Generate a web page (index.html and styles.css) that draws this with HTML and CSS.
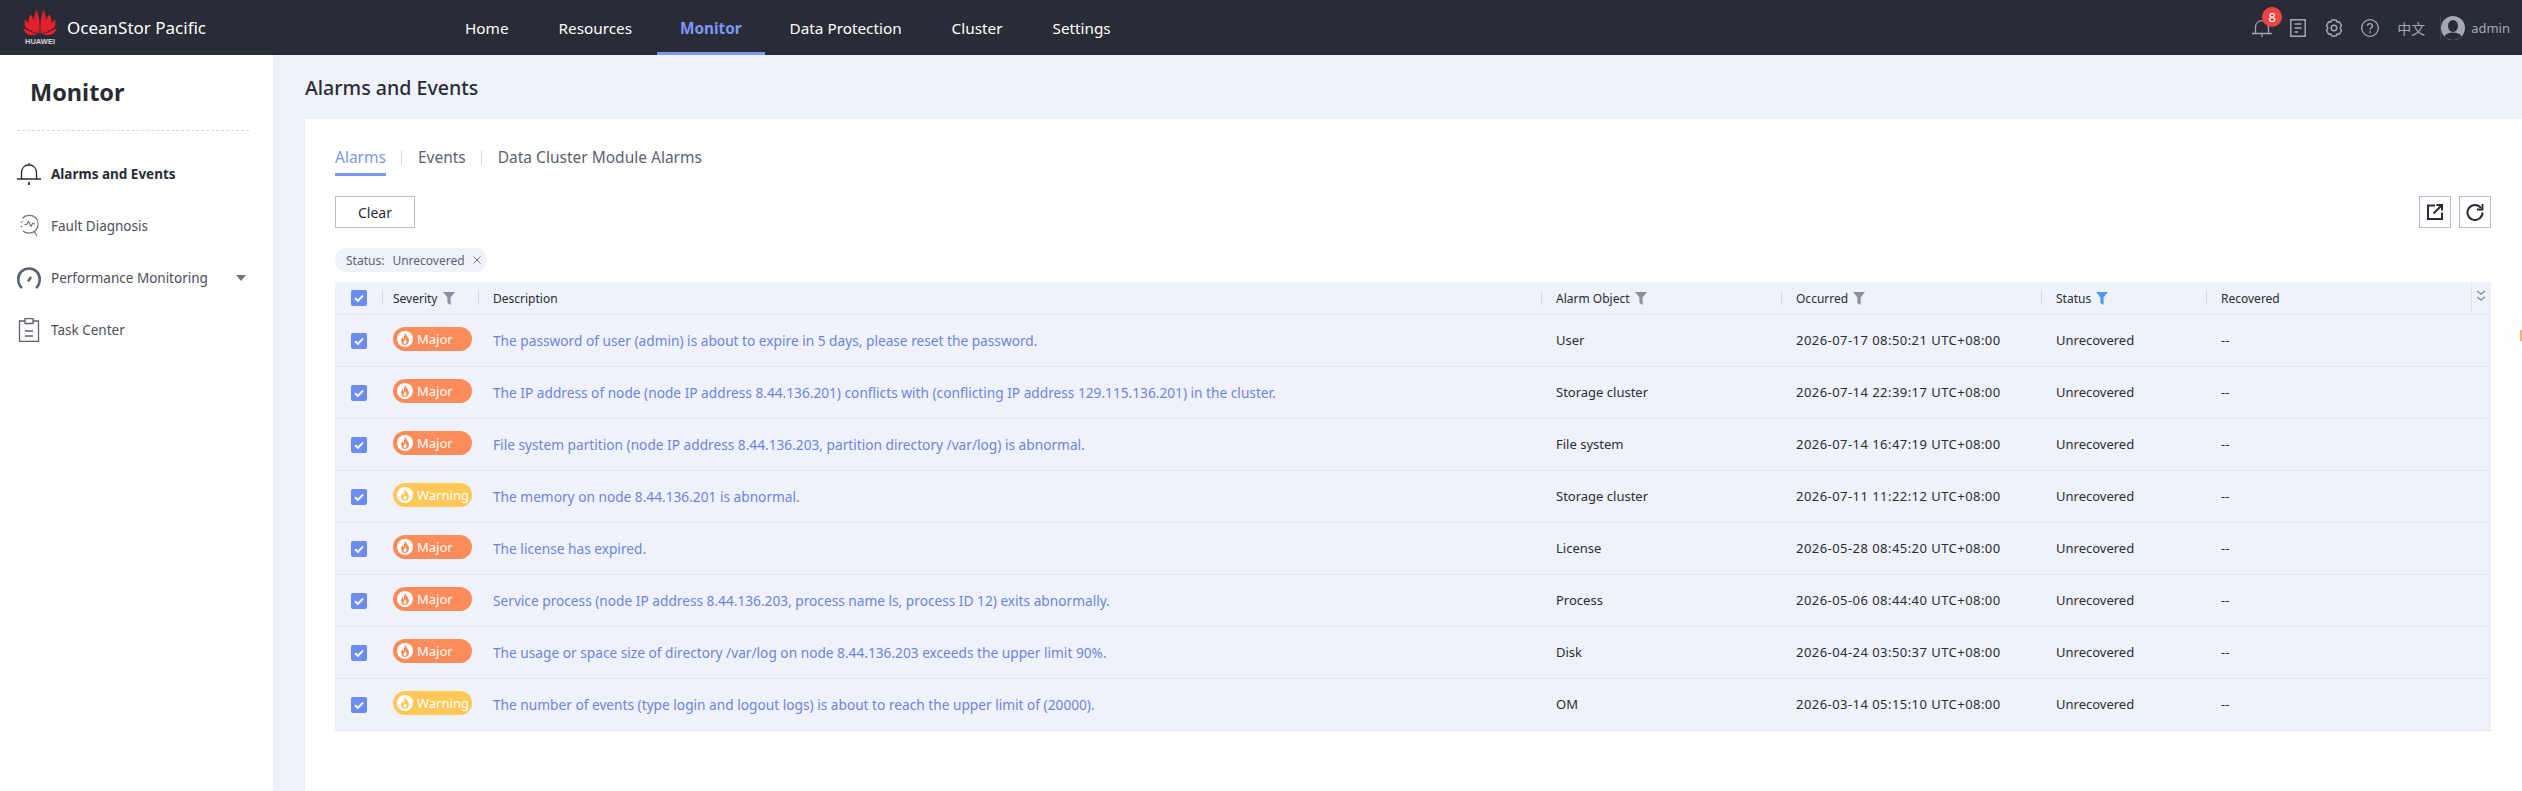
FILE: index.html
```html
<!DOCTYPE html>
<html lang="en">
<head>
	<meta charset="UTF-8">
	<title>OceanStor Pacific</title>
	<link rel="stylesheet" href="styles.css">
</head>
<body>
	<svg class="sprites" width="0" height="0">
		<symbol id="funnel" viewBox="0 0 12 13"><path d="M0 0H12L7.6 5.6V13L4.4 11V5.6Z" fill="currentColor"/></symbol>
		<symbol id="flame" viewBox="0 0 16 16"><circle cx="8" cy="8" r="8" fill="#fff"/><path d="M8.4 2.2C8.8 4.6 12 6 12 9.6 12 12.2 10.2 14 8 14S4 12.2 4 9.8C4 8.2 4.8 7 5.8 6 5.8 7.2 6.2 7.9 6.9 8.2 6.7 6 7.2 3.8 8.4 2.2ZM8.3 8.2C7.6 9.4 6.6 10 6.6 11.2 6.6 12.2 7.2 12.9 8 12.9S9.5 12.2 9.5 11.2C9.5 10.2 8.7 9.4 8.3 8.2Z" fill="currentColor" fill-rule="evenodd"/></symbol>
		<symbol id="tick" viewBox="0 0 16 16"><path d="M4 8.2 6.9 10.8 12 5.6" fill="none" stroke="#fff" stroke-width="2"/></symbol>
	</svg>

	<header class="topbar">
		<div class="brand">
			<div class="logo">
				<svg width="34" height="25" viewBox="0 0 34 25">
					<g fill="#e3202c">
						<path d="M16.300 24 11.500 15C10.300 10 11.500 3.500 13.500 0 16 5 17.300 15 16.300 24Z"/>
						<path d="M17.700 24 22.500 15C23.700 10 22.500 3.500 20.500 0 18 5 16.700 15 17.700 24Z"/>
						<path d="M15.300 24 6.500 15.500C5 12 5.800 7 7.300 4.200 10.800 8 14.300 16 15.300 24Z"/>
						<path d="M18.700 24 27.500 15.500C29 12 28.200 7 26.700 4.200 23.200 8 19.700 16 18.700 24Z"/>
						<path d="M14.300 24.300 2.500 17.500C1.300 15.500 1.300 12 2 9.700 6.500 13 11.500 19 14.300 24.300Z"/>
						<path d="M19.700 24.300 31.500 17.500C32.700 15.500 32.700 12 32 9.700 27.500 13 22.500 19 19.700 24.300Z"/>
						<path d="M13.800 25H6C3.500 24 1 21 0 18.500 5 20 10.500 22.500 13.800 25Z"/>
						<path d="M20.200 25H28C30.500 24 33 21 34 18.500 29 20 23.500 22.500 20.200 25Z"/>
					</g>
				</svg>
				<span class="logo-word">HUAWEI</span>
			</div>
			<span class="product">OceanStor Pacific</span>
		</div>
		<nav class="mainnav">
			<a href="#">Home</a>
			<a href="#">Resources</a>
			<a href="#" class="active">Monitor</a>
			<a href="#">Data Protection</a>
			<a href="#">Cluster</a>
			<a href="#">Settings</a>
		</nav>
		<div class="tools">
			<span class="bell">
				<svg width="20" height="20" viewBox="0 0 20 20" fill="none" stroke="#a2a8b8" stroke-width="1.300"><path d="M0 15.500H20M3.500 15.500V9.500C3.500 5.500 6.200 2.700 10 2.700S16.500 5.500 16.500 9.500V15.500M10 15.500V19"/></svg>
				<span class="badge">8</span>
			</span>
			<svg class="doc" width="16" height="18" viewBox="0 0 16 18" fill="none" stroke="#a2a8b8" stroke-width="1.500"><path d="M.8.800H15.200V17.200H.8ZM4.500 5H11.500M4.500 9H11.500M4.500 13H8"/></svg>
			<svg class="gear" width="18" height="18" viewBox="0 0 18 18" fill="none" stroke="#a2a8b8" stroke-width="1.400"><path d="M6.800 1 11.200 1 12 3 14.200 2.700 16.600 6.600 15.300 8.300V9.700L16.600 11.400 14.200 15.300 12 15 11.200 17H6.800L6 15 3.800 15.300 1.400 11.400 2.700 9.700V8.300L1.400 6.600 3.800 2.700 6 3Z" stroke-linejoin="round"/><circle cx="9" cy="9" r="2.800"/></svg>
			<svg class="help" width="18" height="18" viewBox="0 0 18 18" fill="none" stroke="#a2a8b8" stroke-width="1.300"><circle cx="9" cy="9" r="8.300"/><path d="M6.500 7C6.500 5.500 7.600 4.700 9 4.700S11.500 5.600 11.500 6.900C11.500 8.600 9 8.800 9 10.800"/><path d="M9 12.300V13.800" stroke-width="1.600"/></svg>
			<span class="lang">中文</span>
			<span class="user">
				<svg width="24" height="24" viewBox="0 0 24 24"><circle cx="12" cy="12" r="12" fill="#a2a8b8"/><ellipse cx="12" cy="10" rx="5" ry="6" fill="#292c36"/><path d="M3.500 20.500C5 17.500 8 16.500 12 16.500S19 17.500 20.500 20.500C18 22.800 15 24 12 24S6 22.800 3.500 20.500Z" fill="#292c36"/></svg>
				<span>admin</span>
			</span>
		</div>
	</header>

	<div class="layout">
		<aside class="sidebar">
			<h2 class="side-title">Monitor</h2>
			<ul class="sidemenu">
				<li class="current">
					<svg width="24" height="24" viewBox="0 0 24 24" fill="none" stroke="#292c36" stroke-width="1.300"><path d="M0 17H24M4.500 17V11C4.500 6 7.500 3 12 3S19.500 6 19.500 11V17M12 3V1"/><path d="M12 20V23" stroke-width="1.800"/></svg>
					<span>Alarms and Events</span>
				</li>
				<li>
					<svg width="24" height="24" viewBox="0 0 24 24" fill="none" stroke="#6e7486" stroke-width="1.200"><path d="M5.500 4C9 .5 15 .5 18.500 3.500 22 7 22 13 18.500 16.500 15 20 9 20 6 17M17.500 18 20 22"/><path d="M7.500 10.500H9.500L11.500 7.500 14 12.500 15.500 9.500 18 10"/><path d="M4 7.500 6 9M4 13 6 11.500" stroke-dasharray="1.500 1"/></svg>
					<span>Fault Diagnosis</span>
				</li>
				<li>
					<svg width="24" height="24" viewBox="0 0 24 24" fill="none" stroke="#5c6274" stroke-width="2.600"><path d="M5 22C2.500 20 1.300 17 1.300 13 1.300 7 6 2.500 12 2.500S22.700 7 22.700 13C22.700 17 21.500 20 19 22"/><path d="M11 15.500 14 11" stroke-width="2.400"/></svg>
					<span>Performance Monitoring</span>
					<i class="caret"></i>
				</li>
				<li>
					<svg width="24" height="24" viewBox="0 0 24 24" fill="none" stroke="#5c6274" stroke-width="1.300"><path d="M8 3H2.500V23.500H21.500V3H16M8 .5H16V5.500H8ZM8 13H16M8 18H16"/></svg>
					<span>Task Center</span>
				</li>
			</ul>
		</aside>

		<main class="content">
			<h1 class="page-title">Alarms and Events</h1>
			<section class="card">
				<div class="tabs">
					<a href="#" class="tab active">Alarms</a>
					<a href="#" class="tab">Events</a>
					<a href="#" class="tab">Data Cluster Module Alarms</a>
				</div>
				<div class="toolbar">
					<button class="btn">Clear</button>
					<div class="toolbar-right">
						<button class="btn-icon">
							<svg width="16" height="16" viewBox="0 0 16 16" fill="none" stroke="#292c36" stroke-width="2"><path d="M8 1.500H1V15H15V8.500M6.500 9.500 14 2M9.500 1H15V6.500"/></svg>
						</button>
						<button class="btn-icon">
							<svg width="18" height="18" viewBox="0 0 18 18" fill="none" stroke="#292c36" stroke-width="2"><path d="M15 5A7.500 7.500 0 1 0 16.500 9.500"/><path d="M16.500 1V6.500H11" stroke-width="1.800"/></svg>
						</button>
					</div>
				</div>
				<div class="chips">
					<span class="chip">
						<span>Status:</span>
						<span>Unrecovered</span>
						<svg width="8" height="8" viewBox="0 0 8 8" stroke="#6e7486" stroke-width="1"><path d="M.5.500 7.500 7.500M7.500.500.5 7.500"/></svg>
					</span>
				</div>

				<table class="alarms">
					<colgroup>
						<col class="c-check"><col class="c-sev"><col class="c-desc"><col class="c-obj"><col class="c-occ"><col class="c-status"><col class="c-rec"><col class="c-end">
					</colgroup>
					<thead>
						<tr>
							<th class="check"><span class="box"><svg width="16" height="16"><use href="#tick"/></svg></span></th>
							<th>Severity <svg class="filter" width="12" height="13"><use href="#funnel"/></svg></th>
							<th>Description</th>
							<th>Alarm Object <svg class="filter" width="12" height="13"><use href="#funnel"/></svg></th>
							<th>Occurred <svg class="filter" width="12" height="13"><use href="#funnel"/></svg></th>
							<th>Status <svg class="filter on" width="12" height="13"><use href="#funnel"/></svg></th>
							<th>Recovered</th>
							<th class="end">
								<svg width="10" height="12" viewBox="0 0 10 12" fill="none" stroke="#8a90a2" stroke-width="1.400"><path d="M1 1 5 4 9 1M1 7 5 10 9 7"/></svg>
							</th>
						</tr>
					</thead>
					<tbody id="rows"></tbody>
				</table>
			</section>
		</main>
	</div>
	<span class="float-tab"></span>

	<template id="row-template">
		<tr>
			<td class="check"><span class="box"><svg width="16" height="16"><use href="#tick"/></svg></span></td>
			<td><span class="sev"><svg width="16" height="16"><use href="#flame"/></svg><span class="sev-name"></span></span></td>
			<td><a href="#" class="desc"></a></td>
			<td class="obj"></td>
			<td class="occ"></td>
			<td>Unrecovered</td>
			<td>--</td>
			<td></td>
		</tr>
	</template>
	<script src="rows.js"></script>
</body>
</html>
```

FILE: rows.js
```js
const alarms = [
	["Major", "The password of user (admin) is about to expire in 5 days, please reset the password.", "User", "2026-07-17 08:50:21 UTC+08:00"],
	["Major", "The IP address of node (node IP address 8.44.136.201) conflicts with (conflicting IP address 129.115.136.201) in the cluster.", "Storage cluster", "2026-07-14 22:39:17 UTC+08:00"],
	["Major", "File system partition (node IP address 8.44.136.203, partition directory /var/log) is abnormal.", "File system", "2026-07-14 16:47:19 UTC+08:00"],
	["Warning", "The memory on node 8.44.136.201 is abnormal.", "Storage cluster", "2026-07-11 11:22:12 UTC+08:00"],
	["Major", "The license has expired.", "License", "2026-05-28 08:45:20 UTC+08:00"],
	["Major", "Service process (node IP address 8.44.136.203, process name ls, process ID 12) exits abnormally.", "Process", "2026-05-06 08:44:40 UTC+08:00"],
	["Major", "The usage or space size of directory /var/log on node 8.44.136.203 exceeds the upper limit 90%.", "Disk", "2026-04-24 03:50:37 UTC+08:00"],
	["Warning", "The number of events (type login and logout logs) is about to reach the upper limit of (20000).", "OM", "2026-03-14 05:15:10 UTC+08:00"],
];

const tbody = document.querySelector("#rows");
const template = document.querySelector("#row-template");
alarms.forEach(([severity, description, object, occurred]) => {
	const row = template.content.cloneNode(true);
	row.querySelector(".sev").classList.add(severity.toLowerCase());
	row.querySelector(".sev-name").textContent = severity;
	row.querySelector(".desc").textContent = description;
	row.querySelector(".obj").textContent = object;
	row.querySelector(".occ").textContent = occurred;
	tbody.appendChild(row);
});
```

FILE: styles.css
```css
* {
	box-sizing: border-box;
}
html, body {
	height: 100%;
}
body {
	margin: 0;
	overflow: hidden;
	font-family: "Noto Sans", "Noto Sans CJK SC", sans-serif;
	font-size: 13px;
	color: #292c36;
	background-color: #eff2fb;
}
a {
	color: inherit;
	text-decoration: none;
}
.sprites {
	display: block;
	height: 0;
}

/* top bar */
.topbar {
	display: flex;
	align-items: stretch;
	height: 55px;
	background-color: #292c36;
	color: #fff;
}
.brand {
	display: flex;
	align-items: center;
	width: 440px;
	padding-left: 23px;
}
.logo {
	display: flex;
	flex-direction: column;
	align-items: center;
	width: 34px;
	margin-right: 10px;
}
.logo svg {
	display: block;
}
.logo-word {
	font-family: "Liberation Sans", sans-serif;
	font-size: 7.500px;
	font-weight: bold;
	line-height: 9px;
	margin-top: 2px;
	color: #d4d6dc;
}
.product {
	font-size: 17px;
}
.mainnav {
	display: flex;
}
.mainnav a {
	display: flex;
	align-items: center;
	padding: 0 25px;
	font-size: 15.300px;
	border-bottom: 3px solid transparent;
	border-top: 3px solid transparent;
}
.mainnav a.active {
	padding: 0 23px;
	color: #7c97f5;
	font-weight: 700;
	border-bottom-color: #7c97f5;
}
.tools {
	display: flex;
	align-items: center;
	margin-left: auto;
	padding-right: 12px;
	color: #a2a8b8;
}
.bell {
	position: relative;
	display: flex;
	margin-right: 18px;
}
.badge {
	position: absolute;
	left: 10px;
	top: -11px;
	width: 20px;
	height: 20px;
	border-radius: 50%;
	background-color: #ee4444;
	color: #fff;
	font-size: 13px;
	line-height: 20px;
	text-align: center;
}
.doc {
	margin-right: 19px;
}
.gear {
	margin-right: 18px;
}
.help {
	margin-right: 18px;
}
.lang {
	font-size: 14px;
	margin-right: 15px;
}
.user {
	display: flex;
	align-items: center;
	gap: 6px;
	font-size: 13px;
	border-left: 1px solid #3e4352;
}

/* left menu */
.layout {
	display: flex;
	height: 736px;
}
.sidebar {
	width: 273px;
	flex-shrink: 0;
	background-color: #fff;
	padding: 0 24px 0 17px;
}
.side-title {
	margin: 0;
	height: 76px;
	padding: 21px 0 0 13px;
	font-size: 23.500px;
	line-height: 33px;
	font-weight: 700;
	border-bottom: 1px dashed #d5d9e6;
}
.sidemenu {
	list-style: none;
	margin: 17px 0 0;
	padding: 0;
}
.sidemenu li {
	display: flex;
	align-items: center;
	gap: 10px;
	height: 52px;
	font-size: 13.500px;
	color: #4a4f5e;
}
.sidemenu li.current {
	color: #292c36;
	font-weight: 700;
}
.caret {
	width: 0;
	height: 0;
	margin-left: auto;
	margin-right: 3px;
	border-left: 5px solid transparent;
	border-right: 5px solid transparent;
	border-top: 6px solid #6e7486;
}

/* content */
.content {
	flex: 1;
	min-width: 0;
	padding-left: 32px;
	display: flex;
	flex-direction: column;
}
.page-title {
	margin: 0;
	height: 64px;
	font-size: 19.600px;
	line-height: 65px;
	font-weight: 500;
}
.card {
	flex: 1;
	background-color: #fff;
	padding: 26px 31px 0 30px;
}
.tabs {
	display: flex;
	align-items: flex-start;
	height: 31px;
}
.tab {
	position: relative;
	font-size: 15.500px;
	line-height: 24px;
	padding-bottom: 4px;
	color: #5c6274;
	margin-right: 32px;
}
.tab + .tab::before {
	content: "";
	position: absolute;
	left: -17px;
	top: 5px;
	width: 1px;
	height: 15px;
	background-color: #d5d9e6;
}
.tab.active {
	color: #7c97f5;
	border-bottom: 3px solid #7c97f5;
}
.toolbar {
	display: flex;
	justify-content: space-between;
	margin-top: 20px;
}
.toolbar-right {
	display: flex;
	gap: 8px;
}
.btn, .btn-icon {
	height: 32px;
	background-color: #fff;
	border: 1px solid #b8bed0;
	font-family: inherit;
	color: #292c36;
	padding: 0;
}
.btn {
	width: 80px;
	font-size: 14px;
}
.btn-icon {
	display: flex;
	align-items: center;
	justify-content: center;
	width: 32px;
}
.chips {
	margin-top: 20px;
	height: 24px;
}
.chip {
	display: inline-flex;
	align-items: center;
	gap: 8px;
	height: 24px;
	width: 152px;
	padding-left: 11px;
	border-radius: 12px;
	background-color: #eff2fb;
	color: #5c6274;
	font-size: 12px;
}

/* table */
.alarms {
	width: 2156px;
	margin-top: 10px;
	border-collapse: collapse;
	table-layout: fixed;
	background-color: #eff2fb;
}
.c-check { width: 47px; }
.c-sev { width: 96px; }
.c-desc { width: 1063px; }
.c-obj { width: 240px; }
.c-occ { width: 260px; }
.c-status { width: 165px; }
.c-rec { width: 265px; }
.c-end { width: 20px; }
.alarms th {
	height: 32px;
	padding: 1px 0 0 15px;
	font-size: 12px;
	font-weight: 400;
	text-align: left;
	white-space: nowrap;
	border-bottom: 1px solid #e1e5f0;
	background: linear-gradient(#d5d9e6, #d5d9e6) left center / 1px 14px no-repeat;
}
.alarms th:nth-child(2) {
	padding-left: 11px;
}
.alarms th.check {
	background: none;
}
.alarms th.end {
	padding: 0;
	text-align: center;
	background: none;
	border-left: 1px solid #e1e5f0;
}
.alarms td {
	height: 52px;
	padding: 0 0 0 15px;
	font-size: 13px;
	white-space: nowrap;
	border-bottom: 1px solid #e1e5f0;
}
.alarms td:nth-child(2) {
	padding-left: 11px;
}
.alarms .check {
	padding: 0 0 0 16px;
}
.alarms td.check {
	padding-top: 2px;
}
.alarms td.occ {
	letter-spacing: 0.450px;
}
.box {
	display: block;
	width: 16px;
	height: 16px;
	border-radius: 2px;
	background-color: #6c8cf5;
}
.box svg {
	display: block;
}
.filter {
	vertical-align: -2px;
	margin-left: 2px;
	color: #8a90a2;
}
.filter.on {
	color: #4a9bf5;
}
.sev {
	display: flex;
	align-items: center;
	gap: 4px;
	width: 79px;
	height: 24px;
	padding-left: 4px;
	margin-top: -2px;
	border-radius: 12px;
	color: #fff;
	font-size: 13px;
}
.sev.major {
	background-color: #fe8c5a;
}
.sev.warning {
	background-color: #fdc858;
}
.sev.major svg {
	color: #fe8c5a;
}
.sev.warning svg {
	color: #fdc858;
}
.desc {
	font-size: 13.700px;
	color: #6c84e0;
}
.float-tab {
	position: absolute;
	right: -12px;
	top: 322px;
	width: 24px;
	height: 30px;
	border-radius: 50%;
	background-color: #fff;
	box-shadow: 0 0 6px rgba(41, 44, 54, 0.04);
}
.float-tab::after {
	content: "";
	position: absolute;
	left: 10px;
	top: 8px;
	width: 2px;
	height: 11px;
	background-color: #fdae6b;
}
```
